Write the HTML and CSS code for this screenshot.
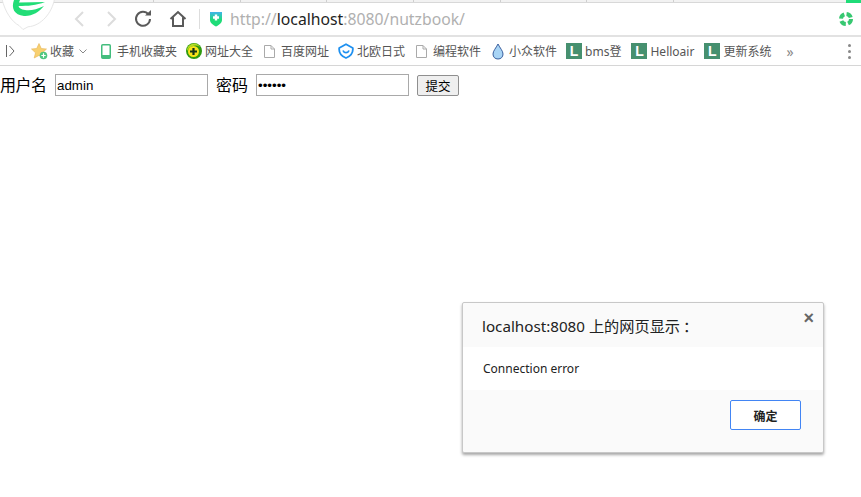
FILE: index.html
```html
<!DOCTYPE html>
<html lang="zh-CN">
<head>
  <meta charset="UTF-8" />
  <title>nutzbook</title>
  <link rel="stylesheet" href="styles.css">
</head>
<body>

<!-- TAB STRIP -->
<div class="tabs">
  <span class="tab t1"></span><span class="tab"></span><span class="tab"></span><span class="tab"></span><span class="tab"></span><span class="tab"></span><span class="tab"></span>
  <span class="tab-new"></span>
</div>

<!-- LOGO -->
<svg class="logo" width="60" height="32" viewBox="0 0 60 32">
  <path d="M2 -1 C5 12 12 22 19 25.500 L23 29.500 L28 26.800 C41 26 52 13 54.500 -1 Z" fill="#fff" stroke="#e6e6e6"/>
  <path d="M14 0 C11 8 14 15 24 16 C32 16.500 39 12 44 6 C37 9.500 30 11 25 10 C21 9.500 19 8 18.500 6 C28 6 36 5.500 45 2 L19 2.500 L20 0 Z" fill="#22dd77"/>
</svg>

<!-- TOOLBAR -->
<div class="toolbar">
  <svg class="nav nav-back" width="12" height="18" viewBox="0 0 12 18"><path d="M10 2 L3 9 L10 16" fill="none" stroke="#dcdcdc" stroke-width="2"/></svg>
  <svg class="nav nav-fwd" width="12" height="18" viewBox="0 0 12 18"><path d="M2 2 L9 9 L2 16" fill="none" stroke="#dcdcdc" stroke-width="2"/></svg>
  <svg class="nav nav-reload" width="18" height="18" viewBox="0 0 18 18"><path d="M14.500 4.500 A7 7 0 1 0 16 9" fill="none" stroke="#5a5a5a" stroke-width="2"/><path d="M11 5.500 L17 5.500 L17 0 Z" fill="#5a5a5a"/></svg>
  <svg class="nav nav-home" width="18" height="18" viewBox="0 0 18 18"><path d="M1.500 9 L9 2 L16.500 9 M4 7.500 L4 16 L14 16 L14 7.500" fill="none" stroke="#5a5a5a" stroke-width="2"/></svg>
  <span class="sep"></span>
  <svg class="shield" width="14" height="16" viewBox="0 0 14 16">
    <defs><linearGradient id="sh" x1="0" y1="0" x2="0" y2="1"><stop offset="0" stop-color="#3fb4ea"/><stop offset="0.55" stop-color="#1fdc78"/></linearGradient></defs>
    <path d="M1 1 L13 1 L13 9 C13 12 10 14 7 15.500 C4 14 1 12 1 9 Z" fill="url(#sh)"/>
    <path d="M7 3.500 L7 9.500 M4 6.500 L10 6.500" stroke="#fff" stroke-width="2.400"/>
  </svg>
  <div class="url"><span class="dim">http://</span>localhost<span class="dim">:8080/nutzbook/</span></div>
  <svg class="ext" width="14" height="14" viewBox="0 0 14 14">
    <circle cx="7" cy="7" r="5" fill="none" stroke="#37c871" stroke-width="4" stroke-dasharray="5.500 2.350"/>
  </svg>
</div>

<!-- BOOKMARKS -->
<div class="bookmarks">
  <svg class="panel" width="9" height="12" viewBox="0 0 9 12"><path d="M0.500 0 L0.500 12" stroke="#666"/><path d="M3.500 1 L8 6 L3.500 11" fill="none" stroke="#666"/></svg>
  <div class="bm bm-fav">
    <svg width="17" height="17" viewBox="0 0 17 17">
      <path d="M8 0.500 L10.300 5.500 L15.500 6 L11.500 9.800 L12.800 15 L8 12.400 L3.200 15 L4.500 9.800 L0.500 6 L5.700 5.500 Z" fill="#f8d070" stroke="#e6b455" stroke-width="0.600"/>
      <circle cx="12.500" cy="12.500" r="3.800" fill="#4fc780"/>
      <path d="M12.500 10.300 L12.500 14.700 M10.300 12.500 L14.700 12.500" stroke="#fff" stroke-width="1.200"/>
    </svg>
    <span>收藏</span>
    <svg class="caret" width="8" height="5" viewBox="0 0 8 5"><path d="M0.500 0.500 L4 4 L7.500 0.500" fill="none" stroke="#888"/></svg>
  </div>
  <div class="bm bm-phone">
    <svg width="10" height="15" viewBox="0 0 10 15"><rect x="0.750" y="0.750" width="8.500" height="13.500" rx="1" fill="#fff" stroke="#43bd7d" stroke-width="1.500"/><rect x="1" y="11" width="8" height="3" fill="#43bd7d"/></svg>
    <span>手机收藏夹</span>
  </div>
  <div class="bm bm-360">
    <svg width="16" height="16" viewBox="0 0 16 16"><circle cx="8" cy="8" r="8" fill="#2f9a10"/><path d="M1 8 A7 7 0 0 1 14 4 A9 9 0 0 0 1 8 Z" fill="#b5dc22"/><circle cx="7.500" cy="8.500" r="5.500" fill="#f8e31a"/><path d="M7.500 5 L7.500 12 M4 8.500 L11 8.500" stroke="#14331a" stroke-width="2.200"/></svg>
    <span>网址大全</span>
  </div>
  <div class="bm bm-doc1">
    <svg class="doc" width="11" height="13" viewBox="0 0 11 13"><path d="M0.500 0.500 L7 0.500 L10.500 4 L10.500 12.500 L0.500 12.500 Z M7 0.500 L7 4 L10.500 4" fill="#fff" stroke="#aaa"/></svg>
    <span>百度网址</span>
  </div>
  <div class="bm bm-nordic">
    <svg width="16" height="16" viewBox="0 0 16 16"><path d="M8 1.200 L14.800 5 C15.200 9 13 13 8 15 C3 13 0.800 9 1.200 5 Z" fill="#fff" stroke="#1e90f0" stroke-width="1.800" stroke-linejoin="round"/><path d="M5 7.500 A3.200 3.200 0 0 0 11 7.500" fill="none" stroke="#1e90f0" stroke-width="1.800"/></svg>
    <span>北欧日式</span>
  </div>
  <div class="bm bm-doc2">
    <svg class="doc" width="11" height="13" viewBox="0 0 11 13"><path d="M0.500 0.500 L7 0.500 L10.500 4 L10.500 12.500 L0.500 12.500 Z M7 0.500 L7 4 L10.500 4" fill="#fff" stroke="#aaa"/></svg>
    <span>编程软件</span>
  </div>
  <div class="bm bm-drop">
    <svg width="12" height="17" viewBox="0 0 12 17"><path d="M6 1 C8 5 11 8 11 11 C11 14 9 16 6 16 C3 16 1 14 1 11 C1 8 4 5 6 1 Z" fill="#a8d4f5" stroke="#3a5f9e"/></svg>
    <span>小众软件</span>
  </div>
  <div class="bm bm-l"><i class="l-icon">L</i><span>bms登</span></div>
  <div class="bm bm-l bm-air"><i class="l-icon">L</i><span>Helloair</span></div>
  <div class="bm bm-l bm-sys"><i class="l-icon">L</i><span>更新系统</span></div>
  <span class="more">»</span>
  <span class="dots"><i></i><i></i><i></i></span>
</div>

<!-- FORM -->
<form class="login">
  <label class="lbl-user">用户名</label>
  <input class="in-user" type="text" value="admin">
  <label class="lbl-pass">密码</label>
  <input class="in-pass" type="password" value="123456">
  <button class="submit" type="button">提交</button>
</form>

<!-- ALERT -->
<div class="dialog">
  <div class="dialog-title">localhost:8080 上的网页显示<span class="colon">：</span></div>
  <span class="dialog-close">×</span>
  <div class="dialog-msg">Connection error</div>
  <div class="dialog-foot"><button class="dialog-ok" type="button">确定</button></div>
</div>

</body>
</html>
```

FILE: styles.css
```css
* { box-sizing: border-box; }
body {
  margin: 0;
  height: 497px;
  overflow: hidden;
  background: #fff;
  color: #000;
  font-family: "Noto Sans", "Noto Sans CJK SC", sans-serif;
  position: relative;
}

/* TAB STRIP */
.tabs {
  display: flex;
  height: 3px;
  background: #f2f2f2;
  border-bottom: 1px solid #d8d8d8;
}
.tab { width: 86.7px; border-right: 1px solid #cfcfcf; }
.tab.t1 { width: 154px; }
.tab-new { width: 15px; margin-left: auto; height: 3px; background: #1fdc78; }

/* LOGO */
.logo { position: absolute; left: 0; top: 0; }

/* TOOLBAR */
.toolbar {
  display: flex;
  align-items: center;
  height: 34px;
  padding-left: 73px;
  border-bottom: 2px solid #e2e2e2;
}
.nav { flex: none; }
.nav-fwd { margin-left: 21px; }
.nav-reload { margin-left: 16px; }
.nav-home { margin-left: 17px; }
.sep { width: 1px; height: 20px; background: #ddd; margin-left: 12px; }
.shield { margin-left: 9px; }
.url {
  margin-left: 7px;
  font-size: 15.75px;
  color: #222;
  white-space: nowrap;
}
.url .dim { color: #b0b0b0; }
.ext { margin-left: auto; margin-right: 8px; }

/* BOOKMARKS */
.bookmarks {
  display: flex;
  align-items: center;
  height: 29px;
  padding-left: 6px;
  border-bottom: 1px solid #d6d6d6;
  font-size: 12px;
  color: #555;
  white-space: nowrap;
}
.panel { flex: none; }
.bm { display: flex; align-items: center; }
.bm svg { flex: none; }
.bm span { display: block; }
.bm-fav { margin-left: 16px; gap: 2px; }
.caret { margin-left: 3px; }
.bm-phone { margin-left: 14px; gap: 6px; }
.bm-360 { margin-left: 9px; gap: 3px; }
.bm-doc1 { margin-left: 11px; gap: 6px; }
.bm-nordic { margin-left: 9px; gap: 3px; }
.bm-doc2 { margin-left: 11px; gap: 6px; }
.bm-drop { margin-left: 11px; gap: 5px; }
.bm-l { margin-left: 9px; gap: 3px; }
.bm-air { margin-left: 10px; }
.bm-sys { margin-left: 10px; }
.l-icon {
  display: block;
  width: 16px;
  height: 16px;
  background: #46906f;
  color: #fff;
  font: bold 14px/16px "Liberation Sans", sans-serif;
  text-align: center;
}
.more { margin-left: 15px; font-size: 14px; color: #888; }
.dots {
  margin-left: auto;
  margin-right: 10px;
  display: flex;
  flex-direction: column;
  gap: 3px;
}
.dots i { display: block; width: 3px; height: 3px; background: #888; border-radius: 50%; }

/* FORM */
.login {
  display: flex;
  align-items: center;
  height: 22px;
  margin-top: 8px;
  font-size: 16px;
  font-family: "Noto Sans CJK SC", sans-serif;
  white-space: nowrap;
}
.login label { position: relative; top: -1px; }
.lbl-user { letter-spacing: -0.5px; width: 48px; }
.login input {
  height: 22px;
  padding: 1px;
  border: 1px solid #a9a9a9;
  font: 13.33px "Liberation Sans", sans-serif;
  background: #fff;
  color: #000;
  outline: none;
}
.in-user { width: 153px; margin-left: 7px; }
.lbl-pass { margin-left: 8px; }
.in-pass { width: 153px; margin-left: 8px; }
.submit {
  width: 42px;
  height: 21px;
  margin-left: 8px;
  padding: 0;
  border: 1px solid #8f8f8f;
  border-radius: 2px;
  background: #efefef;
  font: 12.5px "Noto Sans CJK SC", sans-serif;
  color: #000;
}

/* ALERT */
.dialog {
  position: absolute;
  left: 462px;
  top: 302px;
  width: 362px;
  height: 151px;
  display: flex;
  flex-direction: column;
  background: #fafafa;
  border: 1px solid #c8c8c8;
  border-radius: 2px;
  box-shadow: 0 2px 3px rgba(0, 0, 0, 0.35);
}
.dialog-title {
  height: 44px;
  padding: 11px 0 0 19px;
  font-size: 15.2px;
  color: #222;
}
.colon { margin-left: 3px; }
.dialog-close {
  position: absolute;
  right: 9px;
  top: 5px;
  font: bold 18px/20px "Liberation Sans", sans-serif;
  color: #666;
}
.dialog-msg {
  height: 43px;
  padding: 13px 0 0 20px;
  background: #fff;
  font-size: 12px;
  color: #222;
}
.dialog-foot { display: flex; justify-content: flex-end; padding: 10px 22px 0 0; }
.dialog-ok {
  width: 71px;
  height: 30px;
  padding: 0;
  border: 1px solid #4285f4;
  border-radius: 2px;
  background: #fff;
  font: bold 12px "Noto Sans CJK SC", sans-serif;
  color: #222;
}
```
